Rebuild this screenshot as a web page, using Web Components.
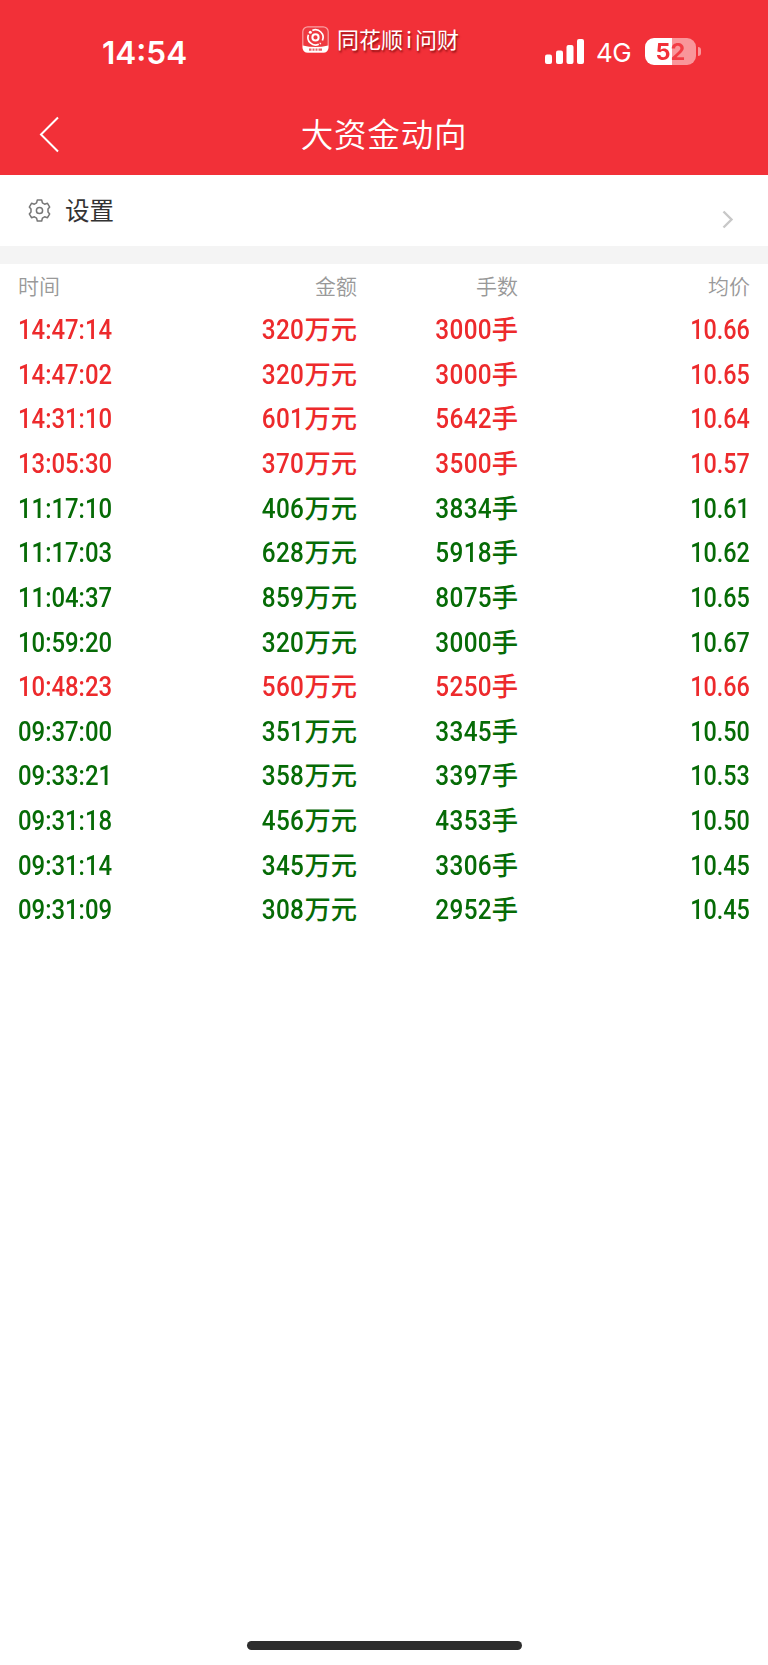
<!DOCTYPE html>
<html lang="zh-CN">
<head>
<meta charset="UTF-8">
<meta name="viewport" content="width=device-width, initial-scale=1">
<title>大资金动向</title>
<style>
    body {
        margin: 0;
        background: #fff;
        font-family: "Noto Sans CJK SC", sans-serif;
        --brand: #f23038;
        --up: #ed2a2c;
        --down: #066b06;
    }

    .thin-i {
        padding: 0 3px;
    }
</style>
</head>
<body>
<fund-page>
    <status-bar slot="top" time="14:54" network="4G" battery="52">同花顺<span class="thin-i">i</span>问财</status-bar>
    <nav-bar slot="top">大资金动向</nav-bar>
    <settings-row>设置</settings-row>
    <fund-table></fund-table>
</fund-page>

<script>
class FundPage extends HTMLElement {
    constructor() {
        super();
        this.attachShadow({ mode: 'open' });
        this.shadowRoot.innerHTML = `
            <style>
                :host {
                    display: flex;
                    flex-direction: column;
                    height: 1665px;
                    overflow: hidden;
                }

                header {
                    height: 174.7px;
                    flex: none;
                    background: var(--brand);
                    color: #fff;
                }

                main {
                    flex: 1;
                }

                .home {
                    width: 275px;
                    height: 9px;
                    margin: 0 auto 15px;
                    border-radius: 5px;
                    background: #2d2d2d;
                }
            </style>
            <header><slot name="top"></slot></header>
            <main><slot></slot></main>
            <div class="home"></div>
        `;
    }
}

class StatusBar extends HTMLElement {
    constructor() {
        super();
        this.attachShadow({ mode: 'open' });
    }

    connectedCallback() {
        const level = this.getAttribute('battery');
        this.shadowRoot.innerHTML = `
            <style>
                :host {
                    display: grid;
                    grid-template-columns: 302px 1fr 225px;
                    height: 96px;
                    align-items: start;
                }

                .time {
                    padding: 34px 0 0 102px;
                    font: 600 31.5px/38px Inter, sans-serif;
                }

                .app {
                    display: flex;
                    align-items: center;
                    padding-top: 26px;
                    font-size: 22px;
                    line-height: 29px;
                    white-space: nowrap;
                    text-shadow: 1px 2px 2px rgba(90, 0, 0, 0.65);
                }

                .app svg {
                    width: 27px;
                    height: 27px;
                }

                .name {
                    margin: -2px 0 0 8px;
                }

                .right {
                    display: flex;
                    align-items: center;
                    padding: 37px 0 0 2px;
                    height: 30px;
                }

                .net {
                    margin: 1px 0 0 11px;
                    width: 37px;
                    font: 400 26px/30px Inter, sans-serif;
                    letter-spacing: -0.6px;
                }

                .battery {
                    display: flex;
                    align-items: center;
                    margin: -1px 0 0 12px;
                }

                .cell {
                    width: 51px;
                    height: 27px;
                    border-radius: 9px;
                    background: linear-gradient(90deg, #fff ${level}%, #f9969a ${level}%);
                    font: 700 23.5px/27px Inter, sans-serif;
                    text-align: center;
                }

                .cell span {
                    background: linear-gradient(90deg, var(--brand) 50%, #f23c44 50%);
                    background-clip: text;
                    -webkit-background-clip: text;
                    color: transparent;
                }

                .tip {
                    width: 3px;
                    height: 9px;
                    margin-left: 1.5px;
                    border-radius: 0 4px 4px 0;
                    background: #f9969a;
                }
            </style>
            <div class="time">${this.getAttribute('time')}</div>
            <div class="app">
                <svg viewBox="0 0 27 27" fill="none">
                    <rect x="0.8" y="0.8" width="25.4" height="25.4" rx="5" fill="#ee3940" stroke="#f9a0a3" stroke-width="1.2"/>
                    <path d="M0.8 19.5Q13.5 22.5 26.2 19.5V22a4.5 4.5 0 0 1-4.5 4.5H5.3A4.5 4.5 0 0 1 0.8 22z" fill="#fff"/>
                    <circle cx="13.5" cy="11.4" r="3.1" stroke="#fff" stroke-width="2"/>
                    <path d="M10.3 4.5a7.6 7.6 0 0 1 10.1 10M16.8 18.2a7.6 7.6 0 0 1-10.4-9.5M17.8 17.8a7.6 7.6 0 0 0 .9-.7" stroke="#fff" stroke-width="1.7"/>
                    <circle cx="8.3" cy="6.3" r="1.5" fill="#fff"/>
                    <path d="M7 23.7h2.5m1 0h2m1 0h2m1 0h3.5" stroke="#e8646a" stroke-width="2.2"/>
                </svg>
                <div class="name"><slot></slot></div>
            </div>
            <div class="right">
                <svg width="40" height="26" viewBox="0 0 40 26" fill="#fff">
                    <rect x="0" y="15.5" width="7" height="9.5" rx="2"/>
                    <rect x="11" y="11.5" width="7" height="13.5" rx="2"/>
                    <rect x="21.5" y="6" width="7" height="19" rx="2"/>
                    <rect x="32" y="0" width="7" height="25" rx="2"/>
                </svg>
                <span class="net">${this.getAttribute('network')}</span>
                <div class="battery">
                    <div class="cell"><span>${level}</span></div>
                    <div class="tip"></div>
                </div>
            </div>
        `;
    }
}

class NavBar extends HTMLElement {
    constructor() {
        super();
        this.attachShadow({ mode: 'open' });
        this.shadowRoot.innerHTML = `
            <style>
                :host {
                    display: grid;
                    grid-template-columns: 80px 1fr 80px;
                    align-items: center;
                    height: 77px;
                }

                svg {
                    margin-left: 39px;
                }

                .title {
                    text-align: center;
                    font-size: 32.5px;
                    font-weight: 350;
                    line-height: 48px;
                    letter-spacing: 0.8px;
                    margin-top: -3px;
                }
            </style>
            <svg width="22" height="37" viewBox="0 0 22 37" fill="none" stroke="#fff" stroke-width="2">
                <path d="M19 1.5L2 18.5l17 17"/>
            </svg>
            <div class="title"><slot></slot></div>
        `;
    }
}

class SettingsRow extends HTMLElement {
    constructor() {
        super();
        this.attachShadow({ mode: 'open' });
        this.shadowRoot.innerHTML = `
            <style>
                :host {
                    display: flex;
                    align-items: flex-start;
                    box-sizing: border-box;
                    height: 89px;
                    padding: 0 34px 0 28px;
                    border-bottom: 18px solid #f4f4f4;
                    color: #333;
                    font-size: 24.5px;
                    line-height: 36px;
                }

                .gear {
                    margin: 24px 14px 0 0;
                }

                .label {
                    flex: 1;
                    padding-top: 17px;
                }

                .arrow {
                    margin-top: 35px;
                }
            </style>
            <svg class="gear" width="23" height="23" viewBox="0 0 23 23" fill="none" stroke="#777" stroke-width="1.5" stroke-linejoin="round">
                <path d="M9.3 1h4.4l.7 2.9 2.2 1.3 2.9-.9 2.2 3.8-1.7 2v2.8l1.7 2-2.2 3.8-2.9-.9-2.2 1.3-.7 2.9H9.3l-.7-2.9-2.2-1.3-2.9.9-2.2-3.8 1.7-2v-2.8l-1.7-2 2.2-3.8 2.9.9 2.2-1.3z"/>
                <circle cx="11.5" cy="11.5" r="3.1"/>
            </svg>
            <div class="label"><slot></slot></div>
            <svg class="arrow" width="12" height="19" viewBox="0 0 12 19" fill="none" stroke="#c8c8c8" stroke-width="2.4">
                <path d="M1.5 1.5l8 8-8 8"/>
            </svg>
        `;
    }
}

const deals = [
    ['14:47:14', '320', '3000', '10.66', 'up'],
    ['14:47:02', '320', '3000', '10.65', 'up'],
    ['14:31:10', '601', '5642', '10.64', 'up'],
    ['13:05:30', '370', '3500', '10.57', 'up'],
    ['11:17:10', '406', '3834', '10.61', 'down'],
    ['11:17:03', '628', '5918', '10.62', 'down'],
    ['11:04:37', '859', '8075', '10.65', 'down'],
    ['10:59:20', '320', '3000', '10.67', 'down'],
    ['10:48:23', '560', '5250', '10.66', 'up'],
    ['09:37:00', '351', '3345', '10.50', 'down'],
    ['09:33:21', '358', '3397', '10.53', 'down'],
    ['09:31:18', '456', '4353', '10.50', 'down'],
    ['09:31:14', '345', '3306', '10.45', 'down'],
    ['09:31:09', '308', '2952', '10.45', 'down']
];

class FundTable extends HTMLElement {
    constructor() {
        super();
        this.attachShadow({ mode: 'open' });
    }

    connectedCallback() {
        const rows = deals.map(([time, amount, lots, price, trend]) => `
            <div class="row ${trend}">
                <div><span class="num">${time}</span></div>
                <div><span class="num">${amount}</span>万元</div>
                <div><span class="num">${lots}</span>手</div>
                <div><span class="num">${price}</span></div>
            </div>
        `).join('');

        this.shadowRoot.innerHTML = `
            <style>
                :host {
                    display: block;
                    padding: 0 18px;
                }

                .row {
                    display: grid;
                    grid-template-columns: 120px 219px 161px 1fr;
                    height: 44.65px;
                    line-height: 44.65px;
                    font-size: 26.3px;
                    font-weight: 500;
                    text-align: right;
                    white-space: nowrap;
                }

                .row > :first-child {
                    text-align: left;
                }

                .head {
                    height: 42.4px;
                    line-height: 43px;
                    color: #999;
                    font-size: 21px;
                    font-weight: 350;
                }

                .up {
                    color: var(--up);
                }

                .down {
                    color: var(--down);
                }

                /* narrow figures, close to DIN proportions */
                .num {
                    display: inline-block;
                    font-family: Roboto, sans-serif;
                    font-size: 27px;
                    letter-spacing: 0.4px;
                    transform: scaleX(0.9);
                    transform-origin: right;
                }

                .row > :first-child .num {
                    letter-spacing: 0;
                    transform: scaleX(0.885);
                    transform-origin: left;
                }

                .row > :last-child .num {
                    letter-spacing: 0;
                    transform: scaleX(0.865);
                }
            </style>
            <div class="row head">
                <div>时间</div><div>金额</div><div>手数</div><div>均价</div>
            </div>
            ${rows}
        `;
    }
}

customElements.define('fund-page', FundPage);
customElements.define('status-bar', StatusBar);
customElements.define('nav-bar', NavBar);
customElements.define('settings-row', SettingsRow);
customElements.define('fund-table', FundTable);
</script>
</body>
</html>
